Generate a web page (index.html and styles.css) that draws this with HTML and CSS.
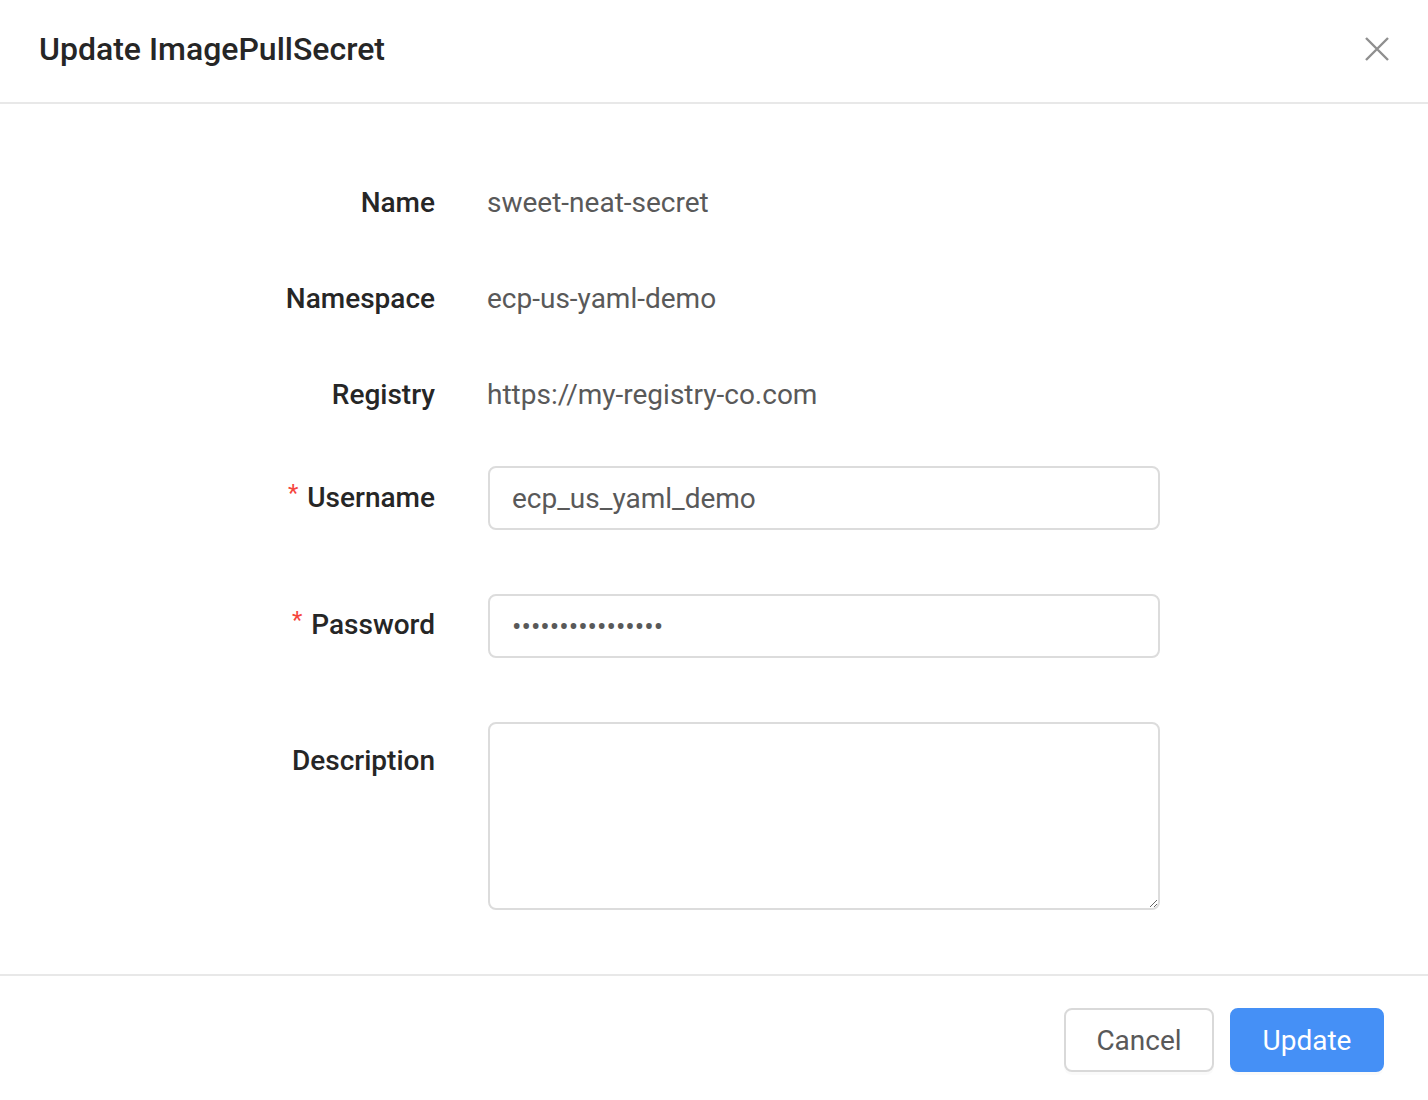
FILE: index.html
```html
<!DOCTYPE html>
<html lang="en">
<head>
<meta charset="utf-8">
<title>Update ImagePullSecret</title>
<link rel="stylesheet" href="styles.css">
</head>
<body>
<div class="dialog">
  <header class="dialog-header">
    <h1 class="dialog-title">Update ImagePullSecret</h1>
    <button class="close-btn" aria-label="Close">
      <svg width="24" height="24" viewBox="0 0 24 24"><path d="M1 1 L23 23 M23 1 L1 23" stroke="#8f8f8f" stroke-width="2.4" fill="none"/></svg>
    </button>
  </header>
  <main class="dialog-body">
    <form class="form">
      <div class="row static">
        <label class="label">Name</label>
        <div class="value">sweet-neat-secret</div>
      </div>
      <div class="row static">
        <label class="label">Namespace</label>
        <div class="value">ecp-us-yaml-demo</div>
      </div>
      <div class="row static last">
        <label class="label">Registry</label>
        <div class="value">https://my-registry-co.com</div>
      </div>
      <div class="row field">
        <label class="label required">Username</label>
        <input class="input" type="text" value="ecp_us_yaml_demo">
      </div>
      <div class="row field">
        <label class="label required pw">Password</label>
        <input class="input" type="password" value="abcdefghijklmnop">
      </div>
      <div class="row field area">
        <label class="label">Description</label>
        <textarea class="textarea"></textarea>
      </div>
    </form>
  </main>
  <footer class="dialog-footer">
    <button class="btn btn-default">Cancel</button>
    <button class="btn btn-primary">Update</button>
  </footer>
</div>
</body>
</html>
```
FILE: styles.css
```css
* { box-sizing: border-box; }
html, body { margin: 0; padding: 0; background: #fff; }
body { font-family: Roboto, "Liberation Sans", sans-serif; color: #262626; }

.dialog { width: 1428px; height: 1100px; display: flex; flex-direction: column; }

.dialog-header {
  height: 104px;
  border-bottom: 2px solid #e8e8e8;
  display: flex;
  align-items: center;
  justify-content: space-between;
  padding: 0 39px 4px 40px;
}
.dialog-title { margin: 0 0 0 -1px; font-size: 32px; font-weight: 500; color: #262626; letter-spacing: 0; }
.close-btn { border: 0; background: none; padding: 0; width: 24px; height: 24px; display: flex; cursor: pointer; }

.dialog-body { padding-top: 66px; height: 872px; border-bottom: 2px solid #e8e8e8; }

.form { display: flex; flex-direction: column; }
.row { display: grid; grid-template-columns: 435px 672px; column-gap: 53px; align-items: center; }
.row.static { height: 64px; margin-bottom: 32px; }
.row.static.last { margin-bottom: 40px; }
.row.field { margin-bottom: 64px; }
.row.area { align-items: start; }
.row.area .label { line-height: 78px; top: 0; }
.row.static .value { margin-left: -1px; }
.row.static .label { top: 1px; }

.label { text-align: right; font-size: 28px; font-weight: 500; color: #262626; line-height: 1; position: relative; top: 0; }
.label.pw { top: -1px; }
.label.required::before { content: "*"; color: #f5453d; margin-right: 9px; font-size: 24px; font-weight: 400; vertical-align: top; position: relative; top: -3px; }
.value { font-size: 28px; color: #595959; }

.input {
  height: 64px; width: 672px;
  border: 2px solid #dcdcdc; border-radius: 8px;
  padding: 0 22px;
  font-family: Roboto, "Liberation Sans", sans-serif;
  font-size: 28px; color: #595959;
  outline: none;
}
.textarea {
  display: block; height: 188px; width: 672px;
  border: 2px solid #dcdcdc; border-radius: 8px;
  padding: 10px 22px;
  font-family: Roboto, "Liberation Sans", sans-serif;
  font-size: 28px; color: #595959;
  outline: none;
}

.dialog-footer {
  flex: 1;
  display: flex; justify-content: flex-end; align-items: flex-start;
  gap: 16px;
  padding: 32px 44px 0 0;
}
.btn {
  height: 64px; border-radius: 8px;
  font-family: Roboto, "Liberation Sans", sans-serif;
  font-size: 28px; font-weight: 400;
  box-shadow: 0 3px 0 rgba(0,0,0,0.02);
  cursor: pointer;
}
.btn-default { width: 150px; background: #fff; border: 2px solid #d9d9d9; color: #595959; }
.btn-primary { width: 154px; background: #4590f6; border: 2px solid #4590f6; color: #fff; }
```
